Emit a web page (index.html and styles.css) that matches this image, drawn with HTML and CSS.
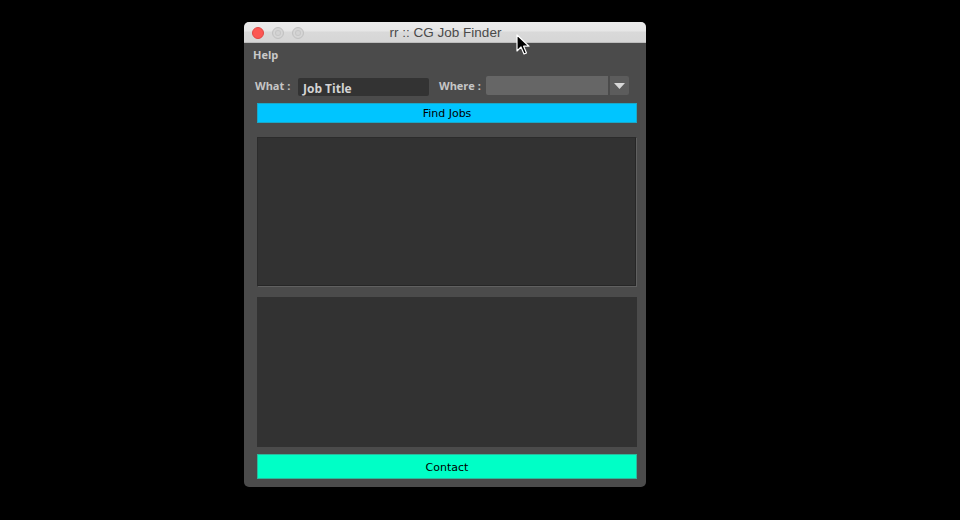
FILE: index.html
```html
<!DOCTYPE html>
<html>
<head>
<meta charset="utf-8">
<link rel="stylesheet" href="styles.css">
</head>
<body>
<div class="desktop">
  <div class="window">
    <div class="titlebar">
      <div class="lights">
        <span class="light red"></span>
        <span class="light gray"></span>
        <span class="light gray"></span>
      </div>
      <div class="title">rr :: CG Job Finder</div>
    </div>
    <div class="menubar"><span class="menu">Help</span></div>
    <div class="content">
      <div class="searchrow">
        <span class="label">What :</span>
        <div class="input">Job Title</div>
        <span class="label where">Where :</span>
        <div class="combo"></div>
        <div class="combo-btn"><svg width="11" height="6" viewBox="0 0 11 6"><path d="M0 0H11L5.5 6Z" fill="#d8d8d8"/></svg></div>
      </div>
      <div class="btn find">Find Jobs</div>
      <div class="panel first"></div>
      <div class="panel second"></div>
      <div class="btn contact">Contact</div>
    </div>
  </div>
  <svg class="cursor" width="16" height="24" viewBox="0 0 16 24">
    <path d="M1 1 L1 17 L5 13 L8 20 L10.5 19 L7.6 12.2 L13 12.2 Z" fill="#000" stroke="#fff" stroke-width="1.2" stroke-linejoin="round"/>
  </svg>
</div>
</body>
</html>
```
FILE: styles.css
```css
html, body {
  margin: 0;
  padding: 0;
  background: #000;
}
.desktop {
  position: relative;
  width: 960px;
  height: 520px;
  padding-top: 22px;
  box-sizing: border-box;
}
.window {
  margin-left: 244px;
  width: 402px;
  height: 465px;
  background: #4b4b4b;
  border-radius: 5px;
  overflow: hidden;
  display: flex;
  flex-direction: column;
}
.titlebar {
  height: 21px;
  flex: none;
  background: linear-gradient(#ebebeb 0, #e6e6e6 9px, #d9d9d9 10px, #d6d6d6 100%);
  display: flex;
  align-items: center;
  position: relative;
  border-bottom: 1px solid #bdbdbd;
  box-sizing: border-box;
}
.lights {
  display: flex;
  gap: 8px;
  padding-left: 8px;
  padding-top: 1px;
}
.light {
  width: 12px;
  height: 12px;
  border-radius: 50%;
  box-sizing: border-box;
}
.light.red {
  background: #fc5753;
  border: 1px solid #df4744;
}
.light.gray {
  background: #d3d3d3;
  border: 1px solid #c2c2c2;
  box-shadow: inset 0 0 0 2px #d6d6d6, inset 0 0 0 3px #c6c6c6;
}
.title {
  position: absolute;
  left: 0;
  right: 0;
  top: 3px;
  text-align: center;
  font-family: "Liberation Sans", Arial, sans-serif;
  font-size: 13.5px;
  color: #4a4a4a;
  padding-left: 1px;
}
.menubar {
  height: 22px;
  display: flex;
  align-items: center;
  padding-left: 9px;
}
.menu {
  font-family: "Open Sans", sans-serif;
  font-weight: bold;
  font-size: 11px;
  color: #c9c9c9;
}
.content {
  padding: 11px 9px 0 13px;
  display: flex;
  flex-direction: column;
}
.searchrow {
  display: flex;
  align-items: flex-start;
  height: 27px;
}
.label {
  font-family: "Open Sans", sans-serif;
  font-weight: bold;
  font-size: 11px;
  color: #c6c6c6;
  margin-top: 2px;
  margin-left: -2px;
  width: 43px;
  flex: none;
  white-space: nowrap;
}
.label.where {
  margin-left: 10px;
  width: 47px;
}
.input {
  width: 131px;
  height: 18px;
  margin-top: 2px;
  background: #333;
  border-radius: 2px;
  font-family: "Open Sans", sans-serif;
  font-weight: bold;
  font-size: 12px;
  color: #d4d4d4;
  padding-left: 5px;
  box-sizing: border-box;
  line-height: 21px;
  flex: none;
}
.combo {
  width: 122px;
  height: 19px;
  background: #666;
  border-radius: 2px 0 0 2px;
  flex: none;
}
.combo-btn {
  margin-left: 2px;
  width: 19px;
  height: 19px;
  background: #5c5c5c;
  border-radius: 0 2px 2px 0;
  display: flex;
  align-items: center;
  justify-content: center;
  flex: none;
}
.btn {
  width: 380px;
  box-sizing: border-box;
  font-family: "DejaVu Sans", sans-serif;
  font-size: 11px;
  color: #000;
  display: flex;
  align-items: center;
  justify-content: center;
}
.btn.find {
  height: 20px;
  background: #00c5ff;
  border: 1px solid #1aa8c8;
}
.btn.contact {
  height: 25px;
  background: #00ffc6;
  border: 1px solid #2bb89c;
  margin-top: 7px;
  padding-top: 1px;
}
.panel {
  width: 380px;
  height: 150px;
  background: #323232;
  box-sizing: border-box;
}
.panel.first {
  margin-top: 14px;
  border: 1px solid #2b2b2b;
  border-right-color: #606060;
  border-bottom-color: #606060;
  box-shadow: inset -1px -1px 0 #262626;
}
.panel.second {
  margin-top: 10px;
}
.cursor {
  position: absolute;
  left: 516px;
  top: 34px;
}
```
